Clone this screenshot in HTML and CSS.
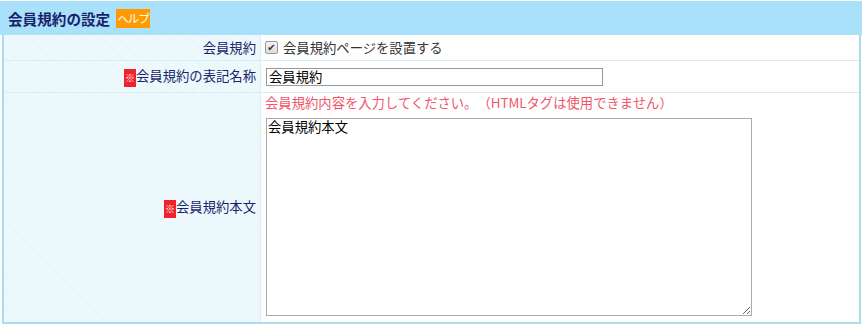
FILE: index.html
```html
<!DOCTYPE html>
<html lang="ja">

<head>
    <meta charset="UTF-8">
    <title>会員規約の設定</title>
    <link rel="stylesheet" href="styles.css">
</head>

<body>
    <div class="section">
        <h2 class="section-title">会員規約の設定 <span class="help">ヘルプ</span></h2>
        <table class="form-table">
            <tr class="row-check">
                <th>会員規約</th>
                <td>
                    <label class="check"><span class="box">✔</span> 会員規約ページを設置する</label>
                </td>
            </tr>
            <tr class="row-name">
                <th><span class="req">※</span>会員規約の表記名称</th>
                <td><input type="text" class="text-input" value="会員規約"></td>
            </tr>
            <tr class="row-body">
                <th><span class="req">※</span>会員規約本文</th>
                <td>
                    <p class="note">会員規約内容を入力してください。（HTMLタグは使用できません）</p>
                    <textarea class="text-area">会員規約本文</textarea>
                </td>
            </tr>
        </table>
    </div>
</body>

</html>
```

FILE: styles.css
```css
body {
    margin: 0;
    padding: 1px 0 0;
    background: #fff;
    font-family: "Noto Sans CJK JP", "Noto Sans", sans-serif;
    font-size: 13.33px;
    color: #333;
    text-spacing-trim: space-all;
}

.section {
    width: 862px;
}

.section-title {
    margin: 0;
    height: 34px;
    padding: 0 0 0 8px;
    display: flex;
    align-items: center;
    gap: 6px;
    background-color: #a9e1fb;
    color: #1b1f6b;
    font-size: 14.6px;
    font-weight: bold;
}

.help {
    display: inline-flex;
    align-items: center;
    height: 19px;
    padding: 0 1px;
    background-color: #ff9a00;
    color: #fff;
    font-size: 11.5px;
    font-weight: normal;
    letter-spacing: -1px;
}

.form-table {
    width: 859px;
    margin-left: 2px;
    border-collapse: collapse;
    border: 2px solid #a9dcef;
    border-top: none;
}

.form-table th,
.form-table td {
    border-bottom: 1px solid #d8eef7;
    padding: 0 4px;
}

.form-table th {
    width: 248px;
    text-align: right;
    font-weight: normal;
    color: #1b1f6b;
    border-right: 1px solid #d8eef7;
    background-color: #f0fafd;
    background-image: repeating-linear-gradient(45deg, #e4f5fb 0, #e4f5fb 1px, transparent 1px, transparent 3px);
}

.form-table td {
    background-color: #fff;
}

.row-check th,
.row-check td {
    height: 25px;
}

.row-name th,
.row-name td {
    height: 31px;
}

.row-body th {
    height: 228px;
}

.row-body td {
    vertical-align: top;
    padding-top: 1px;
}

.check {
    display: flex;
    align-items: center;
    gap: 5px;
    color: #333;
}

.box {
    display: inline-flex;
    align-items: center;
    justify-content: center;
    width: 11px;
    height: 11px;
    border: 1px solid #9a9a9a;
    border-radius: 2px;
    background: linear-gradient(#f2f2f2, #dcdcdc);
    color: #333;
    font-family: "DejaVu Sans", sans-serif;
    font-size: 10px;
    line-height: 1;
}

.req {
    display: inline-block;
    width: 12px;
    height: 18px;
    line-height: 18px;
    vertical-align: middle;
    text-align: center;
    background-color: #f2222c;
    color: #fff;
    font-size: 10px;
}

.text-input {
    width: 337px;
    height: 18px;
    box-sizing: border-box;
    margin: 0 0 0 1px;
    padding: 0 2px;
    border: 1px solid #999;
    font-family: inherit;
    font-size: 13.33px;
    color: #000;
}

.note {
    margin: 0;
    line-height: 18px;
    color: #f2546a;
}

.text-area {
    display: block;
    width: 486px;
    height: 198px;
    box-sizing: border-box;
    margin: 6px 0 6px 1px;
    padding: 0 1px;
    border: 1px solid #aaa;
    font-family: inherit;
    font-size: 13.33px;
    line-height: 15px;
    color: #000;
}
```
